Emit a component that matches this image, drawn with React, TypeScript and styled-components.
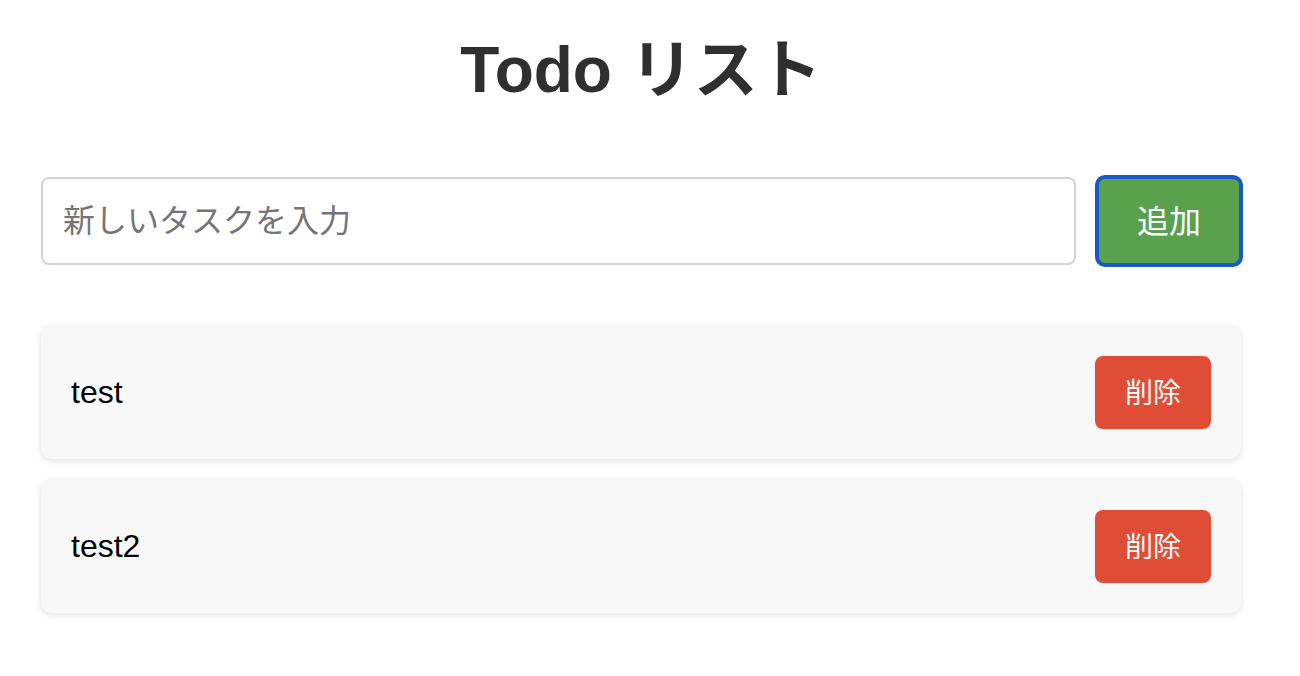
import React, { useState } from "react";
import styled, { createGlobalStyle } from "styled-components";

const GlobalStyle = createGlobalStyle`
  html, body { margin: 0; padding: 0; background: #ffffff; }
  body { font-family: "Liberation Sans", "Noto Sans CJK JP", sans-serif; }
`;

const Page = styled.div`
  padding: 32px 0 40px 41px;
`;

const Container = styled.div`
  width: 1200px;
  display: flex;
  flex-direction: column;
`;

const Title = styled.h1`
  margin: 0 0 68px;
  text-align: center;
  font-family: "Liberation Sans", "Noto Sans CJK JP", sans-serif;
  font-size: 64px;
  line-height: 77px;
  font-weight: 700;
  color: #2f2f2f;
`;

const Form = styled.form`
  display: flex;
  align-items: center;
  gap: 21px;
  margin-bottom: 60px;
`;

const Input = styled.input`
  flex: 1;
  box-sizing: border-box;
  height: 88px;
  padding: 0 20px 6px;
  border: 2px solid #d3d3d3;
  border-radius: 8px;
  font-family: "Noto Sans CJK JP", sans-serif;
  font-size: 32px;
  color: #222;
  outline: none;
  &::placeholder { color: #757575; }
`;

const AddButton = styled.button`
  box-sizing: border-box;
  width: 144px;
  height: 88px;
  padding: 0 0 5px;
  border: none;
  border-radius: 8px;
  background: #5aa14d;
  color: #ffffff;
  font-family: "Noto Sans CJK JP", sans-serif;
  font-size: 32px;
  cursor: pointer;
  outline: 4px solid #1b58c7;
  outline-offset: -2px;
`;

const List = styled.ul`
  list-style: none;
  margin: 0;
  padding: 0;
  display: flex;
  flex-direction: column;
  gap: 20px;
`;

const Item = styled.li`
  display: flex;
  align-items: center;
  justify-content: space-between;
  height: 134px;
  box-sizing: border-box;
  padding: 0 30px;
  background: #f8f8f8;
  border-radius: 10px;
  box-shadow: 0 2px 6px rgba(0, 0, 0, 0.12);
`;

const ItemText = styled.span`
  font-family: "Liberation Sans", sans-serif;
  font-size: 32px;
  color: #000;
`;

const DeleteButton = styled.button`
  box-sizing: border-box;
  width: 116px;
  height: 73px;
  padding: 0 0 3px;
  border: none;
  border-radius: 8px;
  background: #e04d37;
  color: #ffffff;
  font-family: "Noto Sans CJK JP", sans-serif;
  font-size: 28px;
  cursor: pointer;
`;

export default function App() {
  const [todos, setTodos] = useState<string[]>(["test", "test2"]);
  const [text, setText] = useState("");

  const add = (e: React.FormEvent) => {
    e.preventDefault();
    if (!text.trim()) return;
    setTodos([...todos, text.trim()]);
    setText("");
  };

  return (
    <Page>
      <GlobalStyle />
      <Container>
        <Title>Todo リスト</Title>
        <Form onSubmit={add}>
          <Input
            placeholder="新しいタスクを入力"
            value={text}
            onChange={(e) => setText(e.target.value)}
          />
          <AddButton type="submit">追加</AddButton>
        </Form>
        <List>
          {todos.map((t, i) => (
            <Item key={i}>
              <ItemText>{t}</ItemText>
              <DeleteButton onClick={() => setTodos(todos.filter((_, j) => j !== i))}>削除</DeleteButton>
            </Item>
          ))}
        </List>
      </Container>
    </Page>
  );
}
